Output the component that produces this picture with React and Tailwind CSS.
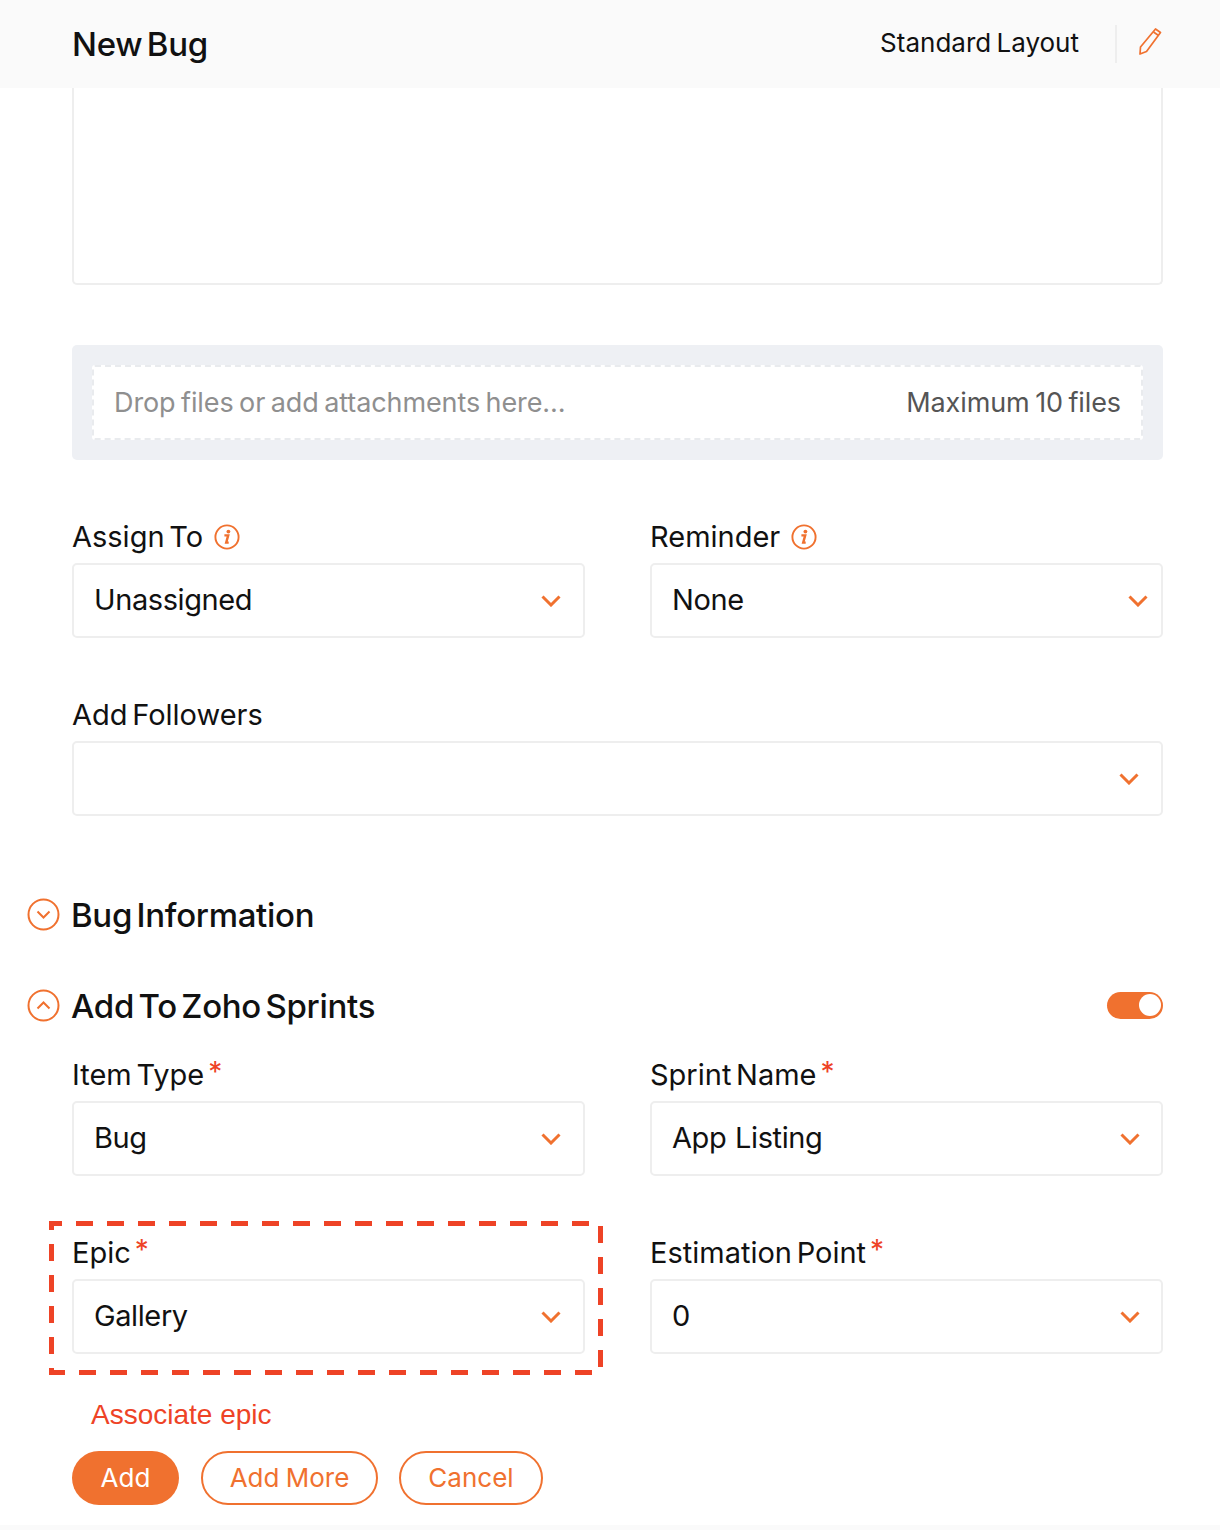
const ORANGE = '#f0712f';
const RED = '#ee4326';

function Chevron({ className = '' }) {
  return (
    <svg width="20" height="12" viewBox="0 0 20 12" fill="none" className={className}>
      <path d="M1.5 1.5l8.5 8.5 8.5-8.5" stroke={ORANGE} strokeWidth="3" />
    </svg>
  );
}

function InfoIcon() {
  return (
    <svg width="26" height="26" viewBox="0 0 26 26" fill="none">
      <circle cx="13" cy="13" r="11.6" stroke={ORANGE} strokeWidth="1.9" />
      <circle cx="14.4" cy="7.6" r="1.9" fill={ORANGE} />
      <path d="M10.4 11.4h3.8l-2 7.2h2.5" stroke={ORANGE} strokeWidth="2.4" />
    </svg>
  );
}

function Label({ children, required, info }) {
  return (
    <div className="flex h-[36px] items-center gap-[11px] text-[29px] text-[#111] [word-spacing:-3.5px]">
      <span>
        {children}
        {required && <span className="relative -top-[3px] ml-[4px] text-[28px] text-[#ee4326]">*</span>}
      </span>
      {info && <InfoIcon />}
    </div>
  );
}

function Select({ value, chevron = 'mr-[22px]' }) {
  return (
    <div className="flex h-[75px] items-center justify-between rounded-[5px] border-2 border-[#eeeeee] bg-white pl-[20px]">
      <span className="pb-[2px] text-[29px] tracking-[-0.4px] text-[#111] [word-spacing:1px]">{value}</span>
      <Chevron className={chevron} />
    </div>
  );
}

function Field({ label, value, required, info, chevron }) {
  return (
    <div className="flex flex-col gap-[8px]">
      <Label required={required} info={info}>{label}</Label>
      <Select value={value} chevron={chevron} />
    </div>
  );
}

function SectionTitle({ open, children, right }) {
  return (
    <div className="-ml-[45px] flex h-[36px] items-center justify-between">
      <div className="flex items-center gap-[11px]">
        <svg width="33" height="33" viewBox="0 0 33 33" fill="none">
          <circle cx="16.5" cy="16.5" r="15" stroke={ORANGE} strokeWidth="2" />
          <path d={open ? 'M10.5 19.5l6-6 6 6' : 'M10.5 13.5l6 6 6-6'} stroke={ORANGE} strokeWidth="2" />
        </svg>
        <h2 className="pt-[3px] text-[33px] font-medium tracking-[-0.3px] text-[#111] [word-spacing:-4px]">{children}</h2>
      </div>
      {right}
    </div>
  );
}

export default function App() {
  return (
    <div className="flex h-[1530px] w-[1220px] flex-col overflow-hidden bg-white font-['Inter',sans-serif]">
      <header className="flex h-[88px] shrink-0 items-center justify-between bg-[#fafafa] pl-[72px] pr-[57px]">
        <h1 className="pt-[1px] text-[33px] font-medium tracking-[-0.3px] text-[#111] [word-spacing:-4px]">New Bug</h1>
        <div className="flex items-center">
          <span className="pb-[3px] text-[26px] text-[#111] [word-spacing:-2px]">Standard Layout</span>
          <div className="ml-[36px] h-[38px] w-[2px] bg-[#eeeeee]" />
          <svg width="26" height="30" viewBox="0 0 26 30" fill="none" className="mb-[6px] ml-[20px]">
            <path d="M18.5 3l5 3.5L9.5 25.5 3 28l.5-7z" stroke={ORANGE} strokeWidth="1.7" strokeLinejoin="round" />
            <path d="M16.5 6l5 3.5" stroke={ORANGE} strokeWidth="1.7" />
          </svg>
        </div>
      </header>

      <main className="flex flex-1 flex-col pl-[72px] pr-[57px]">
        <div className="h-[197px] shrink-0 rounded-b-[5px] border-2 border-t-0 border-[#eeeeee]" />

        <div className="mt-[60px] rounded-[5px] bg-[#eef0f4] p-[20px]">
          <div className="flex h-[75px] items-center justify-between rounded-[3px] border-2 border-dashed border-[#e9ebee] bg-white px-[20px] pt-[2px] text-[27px] tracking-[-0.1px] [word-spacing:-2px]">
            <span className="text-[#8f8f8f]">Drop files or add attachments here…</span>
            <span className="text-[#555]">Maximum 10 files</span>
          </div>
        </div>

        <div className="mt-[59px] grid grid-cols-2 gap-x-[65px]">
          <Field label="Assign To" value="Unassigned" info />
          <Field label="Reminder" value="None" info chevron="mr-[13px]" />
        </div>

        <div className="mt-[59px]">
          <Field value="" label="Add Followers" chevron="mr-[22px]" />
        </div>

        <div className="mt-[80px]">
          <SectionTitle>Bug Information</SectionTitle>
        </div>

        <div className="mt-[55px]">
          <SectionTitle
            open
            right={
              <div className="flex h-[27px] w-[56px] items-center justify-end rounded-full bg-[#f0712f] pr-[2px]">
                <div className="h-[22px] w-[22px] rounded-full bg-white" />
              </div>
            }
          >
            Add To Zoho Sprints
          </SectionTitle>
        </div>

        <div className="relative mt-[34px] grid grid-cols-2 gap-x-[65px] gap-y-[59px]">
          <Field label="Item Type" value="Bug" required />
          <Field label="Sprint Name" value="App Listing" required chevron="mr-[21px]" />
          <Field label="Epic" value="Gallery" required />
          <Field label="Estimation Point" value="0" required chevron="mr-[21px]" />

          {/* red annotation drawn over the Epic field */}
          <svg width="554" height="154" className="absolute -left-[23px] top-[164px]" fill="none" stroke={RED} strokeWidth="5">
            <path d="M2.5 9V2.5H13" />
            <path d="M27 2.5H540" strokeDasharray="17 14" />
            <path d="M551.5 5V146" strokeDasharray="17 14" />
            <path d="M2.5 23V133" strokeDasharray="17 14" />
            <path d="M2.5 147V151.5H16" />
            <path d="M30 151.5H543" strokeDasharray="17 14" />
          </svg>
        </div>

        <p className="ml-[19px] mt-[43px] font-['Liberation_Sans',sans-serif] text-[28px] leading-[36px] text-[#ee4326]">
          Associate epic
        </p>

        <div className="mt-[18px] flex gap-[22px]">
          <button className="h-[54px] w-[107px] rounded-full bg-[#f0712f] pb-[1px] text-[26px] text-white">Add</button>
          <button className="h-[54px] w-[177px] rounded-full border-2 border-[#f0712f] pb-[1px] text-[26px] text-[#f0712f] [word-spacing:-1px]">Add More</button>
          <button className="-ml-[1px] h-[54px] w-[144px] rounded-full border-2 border-[#f0712f] pb-[1px] text-[26px] text-[#f0712f]">Cancel</button>
        </div>
      </main>

      <div className="h-[5px] shrink-0 bg-[#fafafa]" />
    </div>
  );
}
